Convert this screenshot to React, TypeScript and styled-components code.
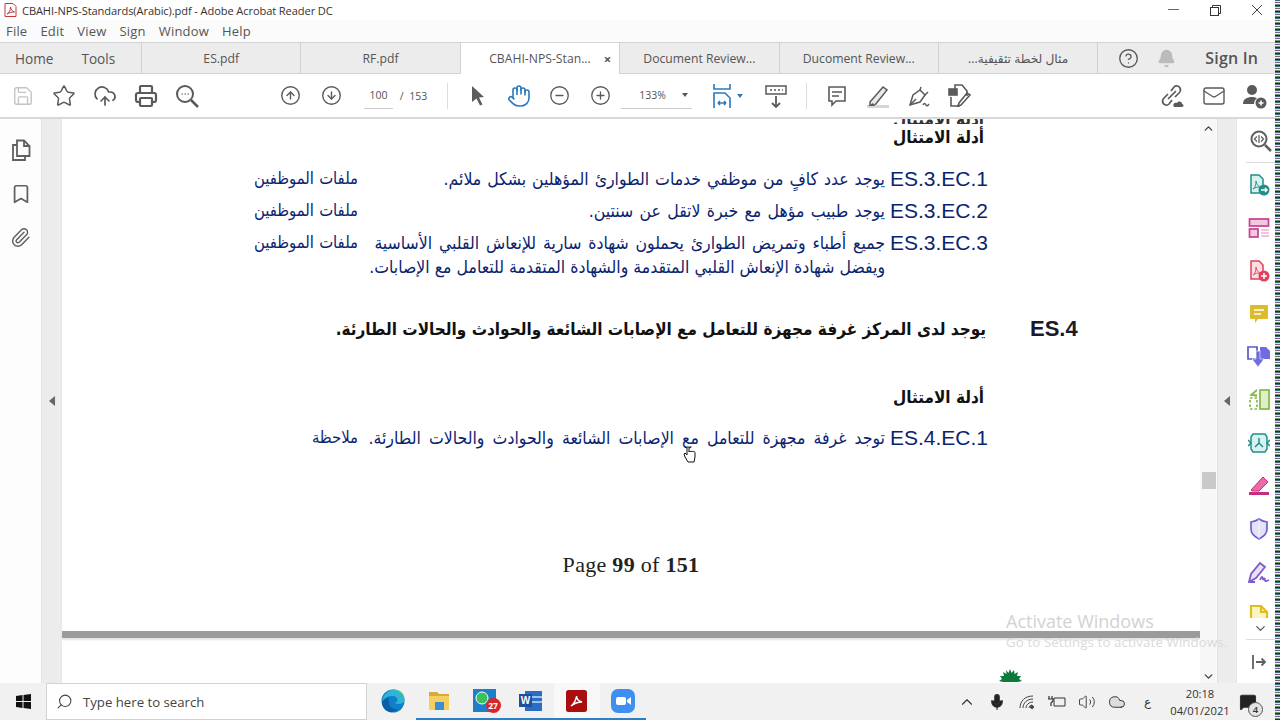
import React from "react";
import styled, { createGlobalStyle } from "styled-components";
import {
  Save, Star, CloudUpload, Printer, CircleArrowUp, CircleArrowDown, Hand, CircleMinus, CirclePlus,
  CircleHelp, Bell, ChevronUp, ChevronDown, Bookmark, Paperclip, Mail, Search, Mic, Volume2, Cloud, MessageSquare,
} from "lucide-react";

const Global = createGlobalStyle`
  html, body { margin: 0; padding: 0; height: 720px; overflow: hidden; background: #fff; }
  #root { height: 720px; }
  * { box-sizing: border-box; }
`;

const UI = `"Open Sans", "Noto Sans", sans-serif`;
const AR = `"DejaVu Sans Condensed", "DejaVu Sans", sans-serif`;

const Root = styled.div`
  width: 1280px; height: 720px; display: flex; overflow: hidden; font-family: ${UI}; color: #444;
`;
const Screen = styled.div`
  width: 1275px; height: 720px; display: flex; flex-direction: column; position: relative;
`;
const Noise = styled.div`
  width: 5px; height: 720px;
  background:
    repeating-linear-gradient(180deg, #3e6f7a 0 1px, #e5e0c8 1px 2px, #7b5c8c 2px 3px, #f2f2ee 3px 4px, #6d9a66 4px 5px, #222a33 5px 6px);
`;
const TitleBar = styled.div`
  height: 20px; background: #fff; display: flex; align-items: center; padding-left: 4px; flex: none;
`;
const TitleText = styled.span`
  font-size: 11.1px; color: #333; margin-left: 5px; white-space: nowrap; letter-spacing: -0.1px;
`;
const WinButtons = styled.div`
  margin-left: auto; display: flex; align-items: center; margin-right: -3px;
`;
const WinBtn = styled.div`
  width: 42px; height: 20px; display: flex; align-items: center; justify-content: center; color: #555;
`;
const MenuBar = styled.div`
  height: 22px; background: #fbfbfb; display: flex; align-items: center; padding-left: 6px; gap: 13px; flex: none;
`;
const MenuItem = styled.span`
  font-size: 13px; color: #555; letter-spacing: .2px;
`;
const TabBar = styled.div`
  height: 32px; background: #ececec; display: flex; flex: none;
  border-top: 1px solid #d4d4d4; border-bottom: 1px solid #d4d4d4;
`;
const NavTabs = styled.div`
  width: 142px; display: flex; align-items: center; padding-left: 15px; gap: 28px; border-right: 1px solid #d0d0d0;
`;
const NavTab = styled.span`
  font-size: 13.6px; color: #555;
`;
const DocTab = styled.div<{ $active?: boolean }>`
  width: 159.4px; height: ${(p) => (p.$active ? "31px" : "30px")}; display: flex; align-items: center; justify-content: center;
  position: relative; font-size: 12.2px; color: #555; white-space: nowrap;
  background: ${(p) => (p.$active ? "#fff" : "transparent")};
  border-right: 1px solid #d0d0d0;
  font-family: ${UI}, "DejaVu Sans";
`;
const TabClose = styled.span`
  position: absolute; right: 8px; top: 7px; font-size: 13px; font-weight: 700; color: #555;
`;
const AccountArea = styled.div`
  flex: 1; display: flex; align-items: center; padding-left: 20px; gap: 18px;
`;
const SignIn = styled.span`
  font-size: 16px; font-weight: 600; color: #555; margin-left: 11px; letter-spacing: .2px;
`;
const ToolBar = styled.div`
  height: 45px; background: #fff; display: flex; align-items: center; flex: none; border-bottom: 2px solid #d8d8d8;
  padding-left: 2px;
`;
const ToolGroup = styled.div<{ $ml?: number }>`
  display: flex; align-items: center; margin-left: ${(p) => p.$ml ?? 0}px;
`;
const ToolCell = styled.div<{ $w?: number; $ml?: number; $color?: string }>`
  width: ${(p) => p.$w ?? 41}px; height: 32px; display: flex; align-items: center; justify-content: center;
  margin-left: ${(p) => p.$ml ?? 0}px;
  color: ${(p) => p.$color ?? "#5a5a5a"};
`;
const PageBox = styled.div`
  width: 30px; height: 26px; margin-left: 12px; border-bottom: 1px solid #ccc; display: flex; align-items: center; justify-content: center;
  font-size: 10.5px; color: #555;
`;
const PageTotal = styled.span`
  font-size: 10.5px; color: #555; margin-left: 7px; white-space: pre;
`;
const ToolDivider = styled.div<{ $ml: number }>`
  width: 1px; height: 26px; background: #ddd; margin-left: ${(p) => p.$ml}px;
`;
const ZoomBox = styled.div`
  width: 73px; height: 26px; border-bottom: 1px solid #ccc; display: flex; align-items: center; padding-left: 18px;
  font-size: 10.5px; color: #555; gap: 16px;
`;
const Caret = styled.span<{ $color?: string; $ml?: number }>`
  width: 0; height: 0; border-left: 3px solid transparent; border-right: 3px solid transparent;
  border-top: 4px solid ${(p) => p.$color ?? "#555"}; margin-left: ${(p) => p.$ml ?? 0}px;
`;
const Main = styled.div`
  height: 564px; display: flex; flex: none; position: relative; overflow: hidden; background: #fff;
`;
const LeftRail = styled.div`
  width: 41px; flex: none; display: flex; flex-direction: column; align-items: center; padding: 16px 0 0 0; gap: 13.500px; color: #606060; background: #fdfdfd;
`;
const RailIcon = styled.div`
  height: 30px; display: flex; align-items: center; justify-content: center;
`;
const Gutter = styled.div<{ $w: number }>`
  width: ${(p) => p.$w}px; flex: none; background: #ececec; display: flex; align-items: center; justify-content: center;
  border-left: 1px solid #e2e2e2; border-right: 1px solid #e6e6e6;
`;
const TriLeft = styled.span`
  width: 0; height: 0; border-top: 5px solid transparent; border-bottom: 5px solid transparent; border-right: 6px solid #666; margin-top: -1px;
`;
const Doc = styled.div`
  width: 1138px; flex: none; overflow: hidden; background: #fff; display: flex; flex-direction: column;
`;
const Content = styled.div`
  width: 926px; margin-left: 192px; display: flex; flex-direction: column; flex: none;
`;
const ClippedHeading = styled.div`
  direction: rtl; width: 730px; height: 5px; overflow: hidden; line-height: 0; font-family: ${AR}; font-weight: 700; font-size: 17px; color: #333; white-space: nowrap; flex: none;
`;
const Heading = styled.div<{ $mt: number }>`
  direction: rtl; width: 730px; font-family: ${AR}; font-weight: 700; font-size: 17px; color: #111;
  height: 28px; line-height: 28px; margin-top: ${(p) => p.$mt}px; white-space: nowrap; flex: none;
`;
const Row = styled.div<{ $mt: number }>`
  display: grid; grid-template-columns: 104px 527px 103px; margin-top: ${(p) => p.$mt}px;
  color: #0a2470;
`;
const Note = styled.div`
  direction: rtl; font-family: ${AR}; font-size: 16.500px; line-height: 24px; white-space: nowrap; word-spacing: .5px;
`;
const Body = styled.div`
  display: flex; flex-direction: column;
`;
const BodyLine = styled.div<{ $ws: number }>`
  direction: rtl; font-family: ${AR}; font-size: 17.500px; line-height: 24px; white-space: nowrap; text-align: right;
  word-spacing: ${(p) => p.$ws}px;
`;
const Code = styled.div`
  font-family: "Liberation Sans", Arial, sans-serif; font-size: 21px; line-height: 24px; text-align: right; white-space: nowrap;
`;
const StdRow = styled.div`
  display: flex; margin-top: 35px; height: 30px; align-items: center; width: 926px; color: #111; flex: none;
`;
const StdText = styled.div`
  direction: rtl; font-family: ${AR}; font-weight: 700; font-size: 17px; white-space: nowrap; width: 732px;
`;
const StdCode = styled.div`
  font-family: "Liberation Sans", Arial, sans-serif; font-size: 22px; font-weight: 700; margin-left: 44px; color: #1a1a2a;
`;
const PageFoot = styled.div`
  font-family: "Liberation Serif", serif; font-size: 22px; letter-spacing: .3px; text-align: center; color: #222; margin-top: 102px; line-height: 26px; flex: none;
`;
const PageRule = styled.div`
  height: 7px; background: #9b9b9b; margin-top: 53px; flex: none; box-shadow: 0 2px 2px #e2e2e2;
`;
const Palm = styled.div`
  margin: 28px 0 0 936px; height: 14px; flex: none;
`;
const ScrollBar = styled.div`
  width: 17px; flex: none; background: #f7f7f7; display: flex; flex-direction: column; align-items: center; color: #444; padding-top: 3px;
`;
const Thumb = styled.div`
  width: 14px; height: 17px; background: #c9c9c9; margin-top: 337px;
`;
const ThumbGap = styled.div`
  flex: 1;
`;
const RightRail = styled.div`
  width: 38px; flex: none; display: flex; flex-direction: column; background: #fff; color: #555; padding-left: 5px;
`;
const RailHead = styled.div`
  height: 44px; flex: none; margin: 0 0 0 4px; display: flex; align-items: center; justify-content: center; border-bottom: 1px solid #ddd; color: #606060;
`;
const RailList = styled.div`
  height: 455px; flex: none; overflow: hidden; display: flex; flex-direction: column;
`;
const RailCell = styled.div`
  height: 43px; flex: none; display: flex; align-items: center; justify-content: center;
`;
const RailMore = styled.div`
  height: 22px; flex: none; margin: 0 0 0 4px; display: flex; align-items: center; justify-content: center; border-bottom: 1px solid #ddd; color: #555;
`;
const RailFoot = styled.div`
  flex: 1; display: flex; align-items: center; justify-content: center; color: #666;
`;
const Watermark = styled.div`
  position: absolute; left: 1006px; top: 490px; color: #d2d2d2; font-size: 18px; font-family: ${UI}; line-height: 24px; white-space: nowrap;
`;
const WatermarkSub = styled.div`
  font-size: 13.300px; line-height: 18px; letter-spacing: .1px; color: #dadada;
`;
const Pointer = styled.div`
  position: absolute; left: 683px; top: 326px;
`;
const Taskbar = styled.div`
  height: 37px; background: #f1f1f1; display: flex; align-items: stretch; flex: none;
`;
const StartBtn = styled.div`
  width: 46px; display: flex; align-items: center; justify-content: center;
`;
const SearchBox = styled.div`
  width: 321px; background: #fff; border: 1px solid #d2d2d2; display: flex; align-items: center; padding-left: 9px; gap: 10px; font-size: 13.200px; color: #444;
`;
const Apps = styled.div`
  display: flex; margin-left: 3px;
`;
const AppBtn = styled.div<{ $active?: boolean }>`
  width: 46px; display: flex; align-items: center; justify-content: center; position: relative;
  background: ${(p) => (p.$active ? "#f8f8f8" : "transparent")};
  border-bottom: 2px solid #2d7fc6;
`;
const PlainApp = styled(AppBtn)`
  width: 45.500px; border-bottom-color: transparent;
`;
const Badge = styled.span`
  position: absolute; right: 7px; bottom: 5px; width: 15px; height: 15px; border-radius: 50%; background: #d9262c; color: #fff;
  font-size: 8.500px; font-weight: 700; display: flex; align-items: center; justify-content: center;
`;
const Tray = styled.div`
  margin-left: auto; display: flex; align-items: center; color: #333;
`;
const TrayCell = styled.div`
  width: 30px; display: flex; align-items: center; justify-content: center; font-size: 12px;
`;
const Clock = styled.div`
  width: 76px; text-align: center; font-size: 11.200px; line-height: 17px; color: #333;
`;
const NotifyCell = styled.div`
  width: 37px; margin-left: -9px; margin-right: 9px; display: flex; align-items: center; justify-content: center; position: relative;
`;
const NotifyCount = styled.span`
  position: absolute; right: 3px; bottom: -6px; width: 15px; height: 15px; border-radius: 50%; border: 1px solid #555; background: #e4e4e4;
  font-size: 9.500px; font-weight: 600; display: flex; align-items: center; justify-content: center;
`;

const AcrobatDoc = () => (
  <svg width="13" height="14" viewBox="0 0 13 14"><path d="M1 .5h8l3 3v10H1z" fill="#fff" stroke="#c23b3b" /><path d="M3 11c2-1 3.500-4 3.500-7 .5 3 2 4.500 4 5-2.500 0-5 .5-7.500 2z" fill="none" stroke="#c23b3b" /></svg>
);
const ZoomSearch = () => (
  <svg width="26" height="26" viewBox="0 0 26 26" fill="none" stroke="#5a5a5a" strokeWidth="2"><circle cx="11" cy="11" r="8" /><path d="M17 17l7 7" strokeWidth="2.500" /><path d="M7.500 11h1.500M10.500 11h1.500M13.500 11h1.500" strokeWidth="1.200" /></svg>
);
const ArrowPointer = () => (
  <svg width="16" height="22" viewBox="0 0 16 22"><path d="M2 1l12 11-5 .5 3.500 7-2.500 1-3.500-7L2 17z" fill="#5c5c5c" /></svg>
);
const FitIcon = () => (
  <svg width="20" height="26" viewBox="0 0 20 26" fill="none" stroke="#2a79bd" strokeWidth="1.600"><path d="M2 1v5h16V1M2 25V10h11l5 5v10M6 20h8M6 20l2-2M6 20l2 2M14 20l-2-2M14 20l-2 2" /></svg>
);
const ReadMode = () => (
  <svg width="22" height="26" viewBox="0 0 22 26" fill="none" stroke="#5a5a5a" strokeWidth="1.500"><rect x="1" y="3" width="20" height="8" /><path d="M5 7h2M9 7h2M13 7h2M17 7h1" /><path d="M11 13v11M7 20l4 4 4-4" strokeWidth="1.800" /></svg>
);
const CommentIcon = () => (
  <svg width="20" height="24" viewBox="0 0 20 24" fill="none" stroke="#5a5a5a" strokeWidth="1.600"><path d="M2 3h16v14H9l-4 4v-4H2z" /><path d="M5 8h10M5 12h7" /></svg>
);
const HighlightIcon = () => (
  <svg width="26" height="26" viewBox="0 0 26 26" fill="none"><path d="M5 19L18 4l4 3-12 15-5 1z" stroke="#5a5a5a" strokeWidth="1.500" fill="#e9e9e9" /><rect x="2" y="22" width="22" height="3" fill="#d6d6d6" /><path d="M3 23l5-3 2 3z" fill="#5a5a5a" /></svg>
);
const SignPen = () => (
  <svg width="26" height="26" viewBox="0 0 26 26" fill="none" stroke="#5a5a5a" strokeWidth="1.500"><path d="M4 22l3-10 7-5 5 5-5 7z" /><path d="M4 22l6-6M15 4l-1 3M19 12l3-3" /><path d="M17 22c1-2 2-2 3 0s2 0 3-1" /></svg>
);
const ExportIcon = () => (
  <svg width="26" height="26" viewBox="0 0 26 26" fill="none" stroke="#5a5a5a" strokeWidth="1.600"><path d="M8 6V2h7l5 6v5M4 14v9h9" /><rect x="2" y="6" width="8" height="6" fill="#5a5a5a" /><path d="M14 22l9-10-3-2-8 10-1 3z" /></svg>
);
const LinkCloud = () => (
  <svg width="26" height="26" viewBox="0 0 26 26" fill="none" stroke="#5a5a5a" strokeWidth="1.700"><path d="M11 8l3-4c2-2 5-1 6 1s0 4-1 5l-4 4M12 17l-3 4c-2 2-5 1-6-1s0-4 1-5l4-4M8 16l8-8" /><path d="M14 24c-2-3 1-5 3-4 1-2 5-2 5 1 2 0 2 3 0 3z" fill="#5a5a5a" stroke="none" /></svg>
);
const UserAdd = () => (
  <svg width="26" height="26" viewBox="0 0 26 26"><circle cx="10" cy="7" r="5" fill="#5a5a5a" /><path d="M1 21c0-5 4-7 9-7 2 0 4 .5 5 1.500-2 1-3 3-3 5.500z" fill="#5a5a5a" /><circle cx="19" cy="20" r="5.500" fill="#5a5a5a" /><path d="M16.500 20h5M19 17.500v5" stroke="#fff" strokeWidth="1.500" /></svg>
);
const PagesIcon = () => (
  <svg width="20" height="22" viewBox="0 0 20 22" fill="none" stroke="#606060" strokeWidth="1.800"><path d="M6 17V1.500h7l5.500 5.500v10z" /><path d="M13 1.500V7h5.500" /><path d="M6 6H2v15h12v-4" /></svg>
);
const MagPlusEye = () => (
  <svg width="24" height="24" viewBox="0 0 24 24" fill="none" stroke="#606060" strokeWidth="2"><circle cx="10" cy="10" r="7.500" /><path d="M16 16l6 6" strokeWidth="2.500" /><path d="M10 6v8M8 7.500L5.500 10 8 12.500M12 7.500l2.500 2.500-2.500 2.500" strokeWidth="1.300" /></svg>
);
const TintDoc = ({ c, fill, sym }: { c: string; fill: string; sym: string }) => (
  <svg width="22" height="22" viewBox="0 0 22 22" fill="none"><path d="M3 1h8l4 4v14H3z" fill={fill} stroke={c} strokeWidth="1.500" /><path d="M5 15c2-1 3-4 3-8 .5 3 2 5 4 6-2.500 0-5 .5-7 2z" stroke={c} strokeWidth=".9" /><circle cx="16" cy="16" r="5.500" fill={c} /><path d={sym} stroke="#fff" strokeWidth="1.500" /></svg>
);
const LayoutForm = () => (
  <svg width="22" height="22" viewBox="0 0 22 22" fill="none" stroke="#c93f93" strokeWidth="1.700"><rect x="1.500" y="2" width="19" height="7" fill="#f2c8df" /><rect x="1.500" y="12" width="8.500" height="8" fill="#f2c8df" /><path d="M13 13h8M13 16h8M13 19h8" stroke="#e08bbd" strokeWidth="1.100" /></svg>
);
const YellowNote = () => (
  <svg width="20" height="20" viewBox="0 0 20 20"><path d="M2 1h16a1 1 0 011 1v12a1 1 0 01-1 1H9l-3 4v-4H2a1 1 0 01-1-1V2a1 1 0 011-1z" fill="#dcbc2a" /><path d="M5 6h10M5 10h7" stroke="#fff" strokeWidth="1.500" /></svg>
);
const Combine = () => (
  <svg width="24" height="24" viewBox="0 0 24 24"><path d="M1 2h9v12H1z" fill="#fff" stroke="#5b57c9" strokeWidth="1.700" /><path d="M13 2h6l4 4v8H13z" fill="#6f6be0" /><path d="M9 14v-8h4v8h4l-6 8-6-8z" fill="#6f6be0" stroke="#fff" strokeWidth=".6" /></svg>
);
const Organize = () => (
  <svg width="22" height="22" viewBox="0 0 22 22" fill="none" stroke="#84b84a" strokeWidth="1.700"><rect x="12" y="1" width="9" height="19" fill="#dff0c9" /><path d="M2 9h7v11H2z" strokeDasharray="2.500 2" /><path d="M9 1L3 6l6 1M3 6h6" /></svg>
);
const Compress = () => (
  <svg width="22" height="22" viewBox="0 0 22 22" fill="none" stroke="#1f8f8a" strokeWidth="1.500"><path d="M5 2h12l2 3v12l-2 3H5l-2-3V5z" fill="#d9f1ef" /><path d="M11 6v5l-4 4M11 11l4 4" /><path d="M0 8l3 3-3 3M22 8l-3 3 3 3" /></svg>
);
const Redact = () => (
  <svg width="22" height="22" viewBox="0 0 22 22"><path d="M3 15L15 2l5 5-9 9H4z" fill="#ec6aa6" stroke="#c92c7c" strokeWidth="1" /><rect x="1" y="17" width="20" height="3" fill="#c92c7c" /></svg>
);
const Shield = () => (
  <svg width="20" height="22" viewBox="0 0 20 22"><path d="M10 1c3 2 5 2.500 8 3v7c0 5-4 8-8 10-4-2-8-5-8-10V4c3-.5 5-1 8-3z" fill="#e4e2fb" stroke="#6a5fd6" strokeWidth="1.700" /><path d="M10 1v20" stroke="#fff" strokeWidth=".6" /></svg>
);
const FillSign = () => (
  <svg width="24" height="22" viewBox="0 0 24 22" fill="none" stroke="#7e5cc9" strokeWidth="1.800"><path d="M2 21l2-8L13 2l5 4-9 11zM3 21h5" fill="#e8e1f8" /><path d="M13 19c2-5 3-3 3 0 1-2 2-2 2 0s2 1 4 0" /></svg>
);
const YellowDoc = () => (
  <svg width="20" height="22" viewBox="0 0 20 22" fill="none" stroke="#e0bd22" strokeWidth="2.200"><path d="M2 20V2h10l6 6v12" fill="#fbf3c4" /><path d="M12 2v6h6" /></svg>
);
const Collapse = () => (
  <svg width="16" height="16" viewBox="0 0 16 16" fill="none" stroke="#606060" strokeWidth="1.800"><path d="M2 1v14M5 8h9M10.500 4.500L14 8l-3.500 3.500" /></svg>
);
const PalmTree = () => (
  <svg width="24" height="14" viewBox="0 0 24 14" fill="#0d7a3d"><path d="M12 0l1.500 4L16 1l.5 4L20 3l-1 4 4 0-2 3 3 2-4 1H5l-4-1 3-2-2-3 4 0-1-4 3.500 2L8 1l2.500 3z" /></svg>
);
const HandCursor = () => (
  <svg width="15" height="18" viewBox="0 0 15 18" fill="#fff" stroke="#111" strokeWidth="1"><path d="M5 17l-3-5-1-3 1-1 2 2V2.500c0-1 2-1 2 0V7c0-1 2-1 2 0 0-1 2-1 2 0 0-1 2-.5 2 .5V12l-1 5z" /></svg>
);
const WinLogo = () => (
  <svg width="15" height="15" viewBox="0 0 15 15" fill="#111"><path d="M0 2l6.500-1v6H0zM7.500 1L15 0v7H7.500zM0 8h6.500v6L0 13zM7.500 8H15v7l-7.500-1z" /></svg>
);
const Edge = () => (
  <svg width="24" height="24" viewBox="0 0 24 24"><circle cx="12" cy="12" r="11.500" fill="#0f7fc7" /><path d="M1 13C2 5 8 .5 13 .5c6 0 10.500 4 10.500 10 0 3-3 4.500-6 4.500-2.500 0-4-1-4-1 2 0 3-1.500 3-3 0-3-3-4.500-6-4C6.500 7.500 3 9 1 13z" fill="#2fb4d8" /><path d="M8 13c0 5 4 8 9 7-2 2-5 3.500-8 3C4 22 1 18 1 13c2-3 5-4.500 7-4.500-.5 1-.5 3 0 4.500z" fill="#0b5ea8" /><path d="M14 1c5 0 9 4 9.500 8-2-4-5-6.500-9.500-8z" fill="#62cf6a" /></svg>
);
const Folder = () => (
  <svg width="22" height="21" viewBox="0 0 22 21"><path d="M1 2h8l2 2h10v3H1z" fill="#d8a93a" /><rect x="1" y="6" width="20" height="14" fill="#f5cf5f" /><rect x="7" y="12" width="9" height="8" fill="#3a8fd0" /></svg>
);
const Whatsapp = () => (
  <svg width="23" height="23" viewBox="0 0 23 23"><rect width="23" height="23" fill="#1d7fc9" /><circle cx="9" cy="9" r="6" fill="#38c25a" stroke="#fff" /></svg>
);
const Word = () => (
  <svg width="23" height="20" viewBox="0 0 23 20"><rect x="6" y="0" width="17" height="20" fill="#2b6cc4" /><rect x="12" y="5" width="11" height="2" fill="#9cc3ee" /><rect x="12" y="10" width="11" height="2" fill="#9cc3ee" /><rect x="0" y="3" width="13" height="13" fill="#1c4fa0" /><text x="6.500" y="13" fontSize="10" fontWeight="700" fill="#fff" textAnchor="middle" fontFamily="Liberation Sans">W</text></svg>
);
const Acrobat = () => (
  <svg width="21" height="22" viewBox="0 0 21 22"><rect width="21" height="22" rx="2.500" fill="#a8100f" /><path d="M5 16c2.500-2 5-6 5.500-10 0 3 2 5 5.500 6-4 0-8 1.500-11 4z" fill="none" stroke="#fff" strokeWidth="1.500" /></svg>
);
const ZoomApp = () => (
  <svg width="24" height="24" viewBox="0 0 24 24"><rect width="24" height="24" rx="7" fill="#3f8ff0" /><rect x="5" y="8" width="10" height="8" rx="2" fill="#fff" /><path d="M16 11l4-3v8l-4-3z" fill="#fff" /></svg>
);
const WifiTray = () => (
  <svg width="16" height="16" viewBox="0 0 16 16" fill="none" stroke="#444" strokeWidth="1"><path d="M1 14C1 7 6 2 14 2M4 14c0-5 4-9 10-9M7 14c0-3 3-6 7-6" /><path d="M10 14c0-2 2-3 3-3" /><circle cx="13" cy="13" r="1.500" fill="#444" /></svg>
);
const BatteryTray = () => (
  <svg width="18" height="13" viewBox="0 0 18 13" fill="none" stroke="#333"><path d="M6 3h11v8H6z" /><path d="M1 1v3M4 1v3M0 4h5v2l-2 2v3" strokeWidth="1.200" /></svg>
);

export default function App() {
  return (
    <Root>
      <Global />
      <Screen>
        <TitleBar>
          <AcrobatDoc />
          <TitleText>CBAHI-NPS-Standards(Arabic).pdf - Adobe Acrobat Reader DC</TitleText>
          <WinButtons>
            <WinBtn><svg width="11" height="2"><rect width="11" height="1" fill="#666" /></svg></WinBtn>
            <WinBtn><svg width="11" height="11" viewBox="0 0 11 11" fill="none" stroke="#333"><rect x=".5" y="2.500" width="8" height="8" /><path d="M2.500 2.500V.5h8v8H8.500" /></svg></WinBtn>
            <WinBtn><svg width="12" height="12" viewBox="0 0 12 12" stroke="#444"><path d="M1 1l10 10M11 1L1 11" /></svg></WinBtn>
          </WinButtons>
        </TitleBar>
        <MenuBar>
          {["File", "Edit", "View", "Sign", "Window", "Help"].map((m) => <MenuItem key={m}>{m}</MenuItem>)}
        </MenuBar>
        <TabBar>
          <NavTabs><NavTab>Home</NavTab><NavTab>Tools</NavTab></NavTabs>
          <DocTab>ES.pdf</DocTab>
          <DocTab>RF.pdf</DocTab>
          <DocTab $active>CBAHI-NPS-Stan...<TabClose>×</TabClose></DocTab>
          <DocTab>Document Review...</DocTab>
          <DocTab>Ducoment Review...</DocTab>
          <DocTab>...مثال لخطة تثقيفية</DocTab>
          <AccountArea>
            <CircleHelp size={21} strokeWidth={1.5} color="#555" />
            <Bell size={19} color="#bbb" fill="#bbb" />
            <SignIn>Sign In</SignIn>
          </AccountArea>
        </TabBar>
        <ToolBar>
          <ToolGroup>
            <ToolCell $color="#c4c4c4"><Save size={22} strokeWidth={1.5} /></ToolCell>
            <ToolCell><Star size={24} strokeWidth={1.5} /></ToolCell>
            <ToolCell><CloudUpload size={24} strokeWidth={1.7} /></ToolCell>
            <ToolCell><Printer size={24} strokeWidth={2.2} /></ToolCell>
            <ToolCell><ZoomSearch /></ToolCell>
          </ToolGroup>
          <ToolGroup $ml={63}>
            <ToolCell><CircleArrowUp size={21} strokeWidth={1.6} /></ToolCell>
            <ToolCell><CircleArrowDown size={21} strokeWidth={1.6} /></ToolCell>
          </ToolGroup>
          <PageBox>100</PageBox>
          <PageTotal>/  153</PageTotal>
          <ToolDivider $ml={20} />
          <ToolGroup $ml={10}>
            <ToolCell $w={40}><ArrowPointer /></ToolCell>
            <ToolCell><Hand size={24} strokeWidth={1.6} color="#2a79bd" /></ToolCell>
            <ToolCell><CircleMinus size={21} strokeWidth={1.5} /></ToolCell>
            <ToolCell><CirclePlus size={21} strokeWidth={1.5} /></ToolCell>
          </ToolGroup>
          <ZoomBox>133% <Caret /></ZoomBox>
          <ToolGroup $ml={18}>
            <ToolCell $w={24}><FitIcon /></ToolCell>
            <Caret $color="#2a79bd" $ml={3} />
            <ToolCell $w={29} $ml={18}><ReadMode /></ToolCell>
          </ToolGroup>
          <ToolDivider $ml={16} />
          <ToolGroup $ml={9}>
            <ToolCell><CommentIcon /></ToolCell>
            <ToolCell><HighlightIcon /></ToolCell>
            <ToolCell><SignPen /></ToolCell>
            <ToolCell><ExportIcon /></ToolCell>
          </ToolGroup>
          <ToolGroup $ml={172}>
            <ToolCell><LinkCloud /></ToolCell>
            <ToolCell><Mail size={24} strokeWidth={1.4} /></ToolCell>
            <ToolCell><UserAdd /></ToolCell>
          </ToolGroup>
        </ToolBar>
        <Main>
          <LeftRail>
            <RailIcon><PagesIcon /></RailIcon>
            <RailIcon><Bookmark size={22} strokeWidth={1.9} /></RailIcon>
            <RailIcon><Paperclip size={21} strokeWidth={1.7} /></RailIcon>
          </LeftRail>
          <Gutter $w={21}><TriLeft /></Gutter>
          <Doc>
            <Content>
              <ClippedHeading>أدلة الامتثال</ClippedHeading>
              <Heading $mt={-1}>أدلة الامتثال</Heading>
              <Row $mt={16}>
                <Note>ملفات الموظفين</Note>
                <Body><BodyLine $ws={0.9}>يوجد عدد كافٍ من موظفي خدمات الطوارئ المؤهلين بشكل ملائم.</BodyLine></Body>
                <Code>ES.3.EC.1</Code>
              </Row>
              <Row $mt={8}>
                <Note>ملفات الموظفين</Note>
                <Body><BodyLine $ws={1.3}>يوجد طبيب مؤهل مع خبرة لاتقل عن سنتين.</BodyLine></Body>
                <Code>ES.3.EC.2</Code>
              </Row>
              <Row $mt={8}>
                <Note>ملفات الموظفين</Note>
                <Body>
                  <BodyLine $ws={1.8}>جميع أطباء وتمريض الطوارئ يحملون شهادة سارية للإنعاش القلبي الأساسية</BodyLine>
                  <BodyLine $ws={0}>ويفضل شهادة الإنعاش القلبي المتقدمة والشهادة المتقدمة للتعامل مع الإصابات.</BodyLine>
                </Body>
                <Code>ES.3.EC.3</Code>
              </Row>
              <StdRow>
                <StdText>يوجد لدى المركز غرفة مجهزة للتعامل مع الإصابات الشائعة والحوادث والحالات الطارئة.</StdText>
                <StdCode>ES.4</StdCode>
              </StdRow>
              <Heading $mt={39}>أدلة الامتثال</Heading>
              <Row $mt={15}>
                <Note>ملاحظة</Note>
                <Body><BodyLine $ws={3.1}>توجد غرفة مجهزة للتعامل مع الإصابات الشائعة والحوادث والحالات الطارئة.</BodyLine></Body>
                <Code>ES.4.EC.1</Code>
              </Row>
            </Content>
            <PageFoot>Page <b>99</b> of <b>151</b></PageFoot>
            <PageRule />
            <Palm><PalmTree /></Palm>
          </Doc>
          <ScrollBar>
            <ChevronUp size={13} strokeWidth={2.5} />
            <Thumb />
            <ThumbGap />
            <ChevronDown size={13} strokeWidth={2.5} />
          </ScrollBar>
          <Gutter $w={20}><TriLeft /></Gutter>
          <RightRail>
            <RailHead><MagPlusEye /></RailHead>
            <RailList>
              <RailCell><TintDoc c="#1f8f8a" fill="#d9f1ef" sym="M13 16h6M17 14l2 2-2 2" /></RailCell>
              <RailCell><LayoutForm /></RailCell>
              <RailCell><TintDoc c="#e0405a" fill="#fbdfe3" sym="M13 16h6M16 13v6" /></RailCell>
              <RailCell><YellowNote /></RailCell>
              <RailCell><Combine /></RailCell>
              <RailCell><Organize /></RailCell>
              <RailCell><Compress /></RailCell>
              <RailCell><Redact /></RailCell>
              <RailCell><Shield /></RailCell>
              <RailCell><FillSign /></RailCell>
              <RailCell><YellowDoc /></RailCell>
            </RailList>
            <RailMore><ChevronDown size={15} strokeWidth={2} /></RailMore>
            <RailFoot><Collapse /></RailFoot>
          </RightRail>
          <Watermark>
            Activate Windows
            <WatermarkSub>Go to Settings to activate Windows.</WatermarkSub>
          </Watermark>
          <Pointer><HandCursor /></Pointer>
        </Main>
        <Taskbar>
          <StartBtn><WinLogo /></StartBtn>
          <SearchBox><Search size={17} strokeWidth={1.5} style={{ transform: "scaleX(-1)" }} />Type here to search</SearchBox>
          <Apps>
            <PlainApp><Edge /></PlainApp>
            <AppBtn><Folder /></AppBtn>
            <AppBtn><Whatsapp /><Badge>27</Badge></AppBtn>
            <AppBtn><Word /></AppBtn>
            <AppBtn $active><Acrobat /></AppBtn>
            <AppBtn><ZoomApp /></AppBtn>
          </Apps>
          <Tray>
            <TrayCell><ChevronUp size={18} strokeWidth={1.5} /></TrayCell>
            <TrayCell><Mic size={18} fill="#222" strokeWidth={1.5} /></TrayCell>
            <TrayCell><WifiTray /></TrayCell>
            <TrayCell><BatteryTray /></TrayCell>
            <TrayCell><Volume2 size={18} strokeWidth={1.2} /></TrayCell>
            <TrayCell><Cloud size={18} fill="#ddd" strokeWidth={1.3} /></TrayCell>
            <TrayCell>ع</TrayCell>
            <Clock>20:18<br />04/01/2021</Clock>
            <NotifyCell><MessageSquare size={18} fill="#222" strokeWidth={1.5} /><NotifyCount>4</NotifyCount></NotifyCell>
          </Tray>
        </Taskbar>
      </Screen>
      <Noise />
    </Root>
  );
}
